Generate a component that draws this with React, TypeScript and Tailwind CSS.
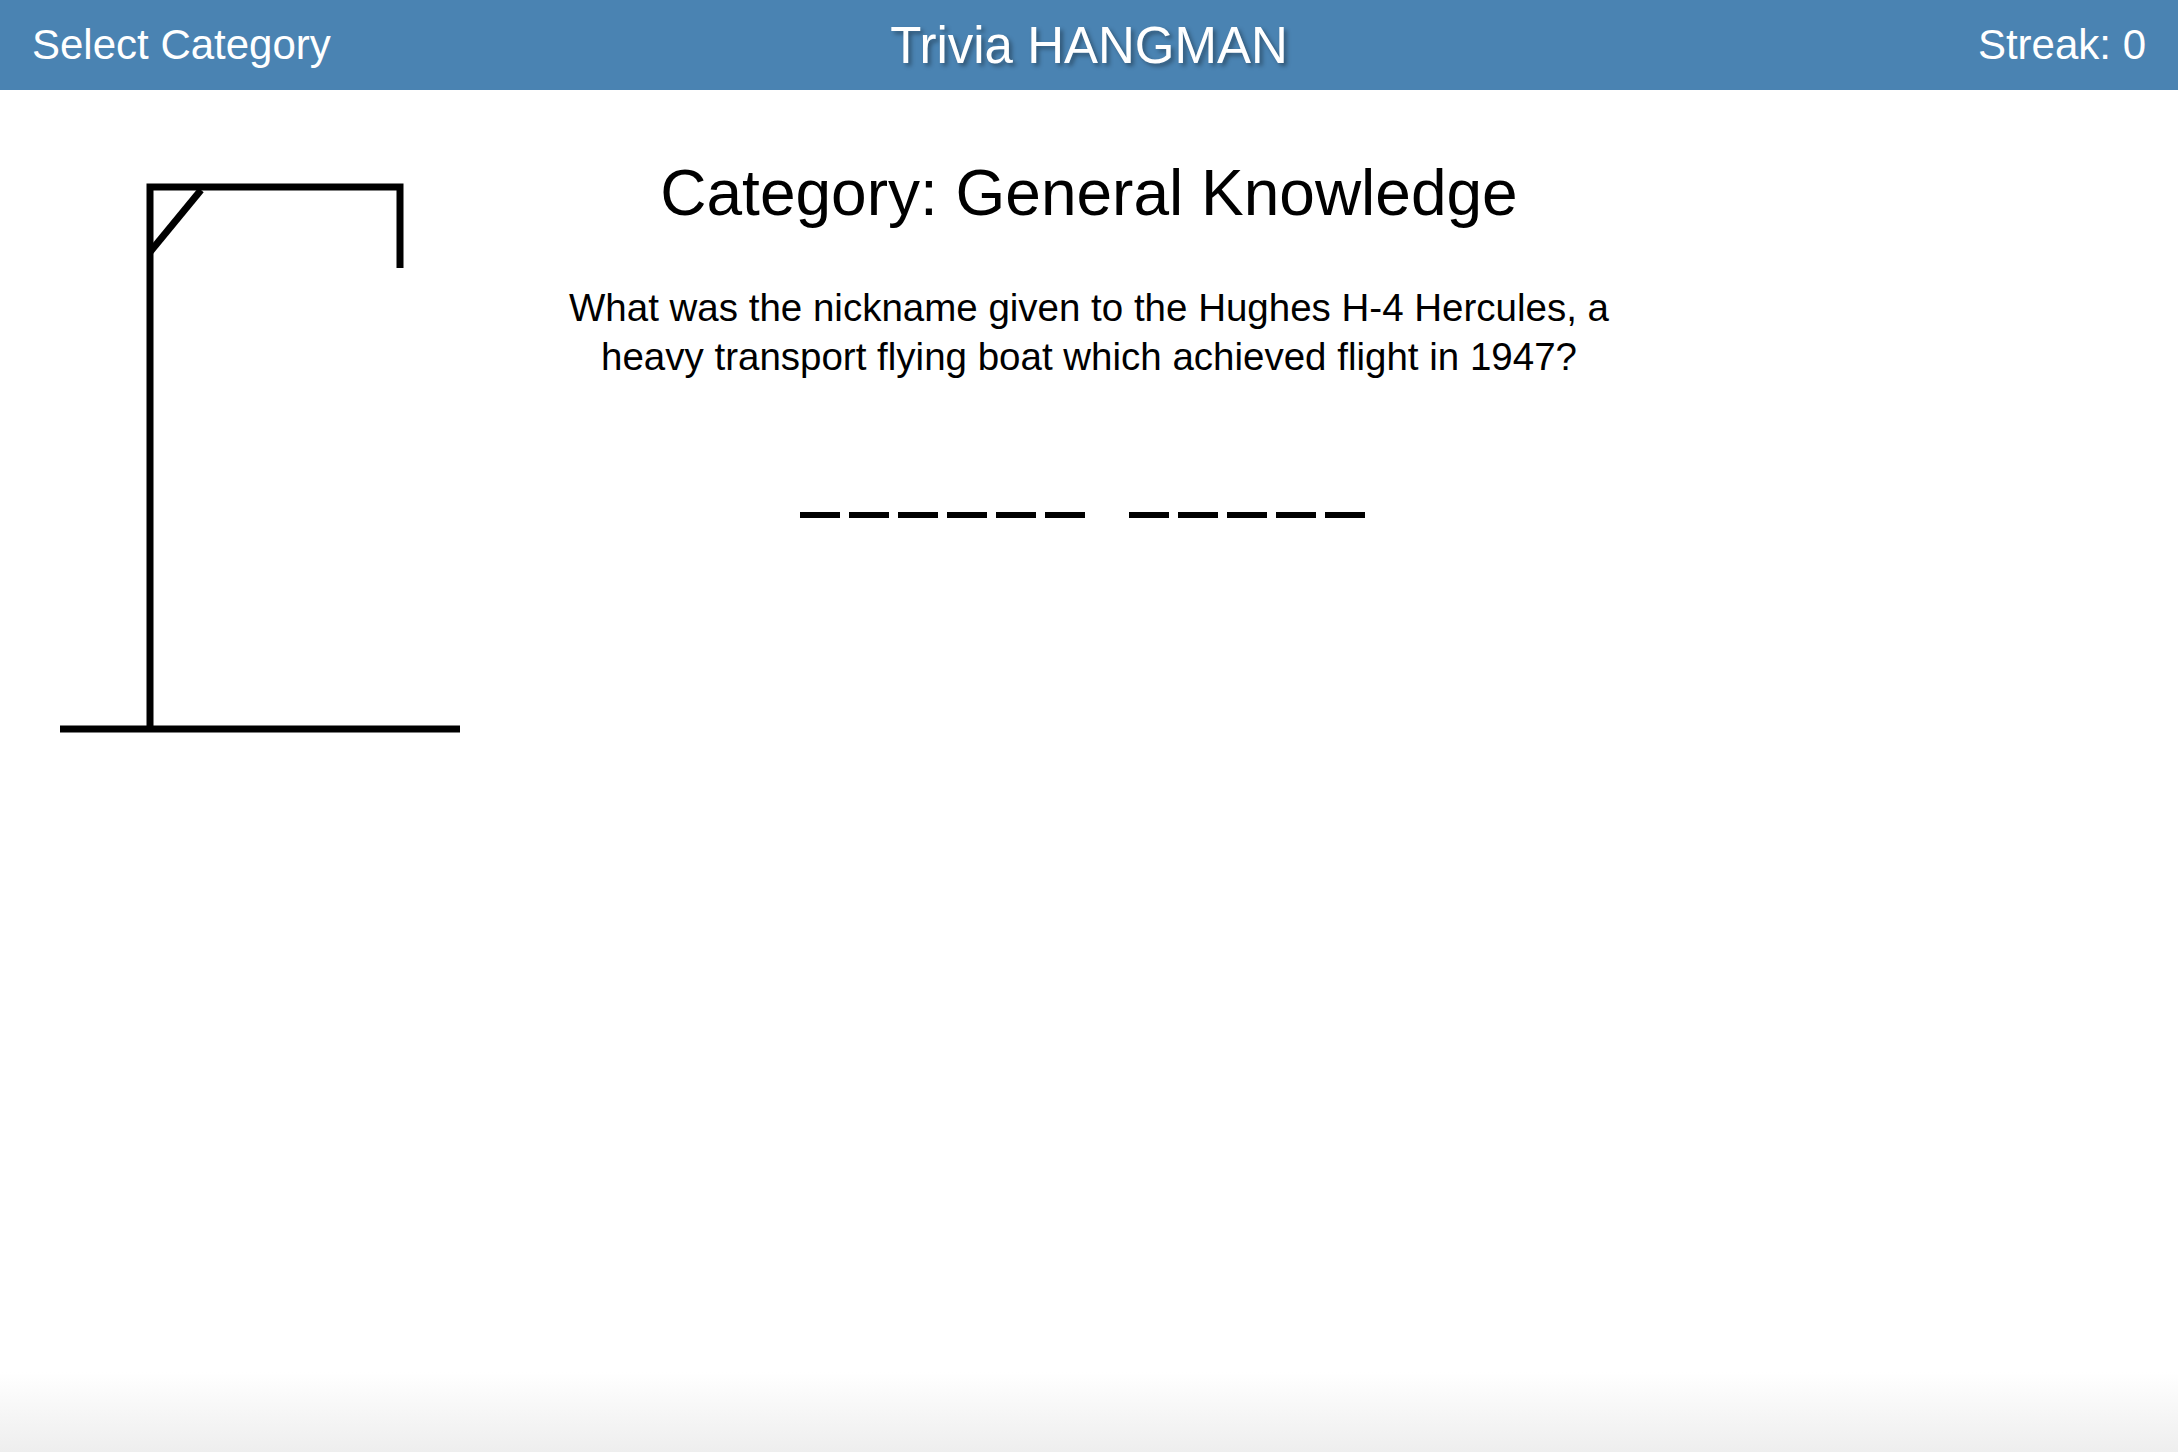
import React from "react";

const words = [6, 5];

export default function App() {
  return (
    <div className="min-h-[1452px] flex flex-col bg-white font-['Liberation_Sans',Arial,sans-serif] text-black">
      <header className="h-[90px] bg-[#4a83b2] flex items-center justify-between px-[32px] relative">
        <div className="text-white text-[42px] leading-none">Select Category</div>
        <div className="absolute left-1/2 -translate-x-1/2 text-white text-[51px] leading-none [text-shadow:3px_3px_4px_rgba(0,0,0,0.35)]">
          Trivia HANGMAN
        </div>
        <div className="text-white text-[42px] leading-none">Streak: 0</div>
      </header>
      <main className="flex-1 grid grid-cols-[1fr_1100px_1fr]">
        <div>
          <svg width="480" height="660" viewBox="0 0 480 660" className="block">
            <g stroke="#000" strokeWidth="7" fill="none" strokeLinecap="butt" strokeLinejoin="miter">
              <path d="M150 639 V97 H400 V178" />
              <line x1="150" y1="162" x2="201" y2="100" />
              <line x1="60" y1="639" x2="460" y2="639" />
            </g>
          </svg>
        </div>
        <div className="flex flex-col items-center pt-[66px]">
          <h1 className="text-[64px] leading-[74px]">Category: General Knowledge</h1>
          <p className="mt-[53px] max-w-[1080px] text-[38.5px] leading-[49px] text-center">
            What was the nickname given to the Hughes H-4 Hercules, a heavy transport flying boat which achieved flight in 1947?
          </p>
          <div className="mt-[131px] mr-[14px] flex gap-[44px]">
            {words.map((n, wi) => (
              <div key={wi} className="flex gap-[9px]">
                {Array.from({ length: n }).map((_, i) => (
                  <span key={i} className="block w-[40px] h-[6px] bg-black" />
                ))}
              </div>
            ))}
          </div>
        </div>
        <div />
      </main>
      <div className="h-[80px] bg-gradient-to-b from-white to-[#eeeeee]" />
    </div>
  );
}
